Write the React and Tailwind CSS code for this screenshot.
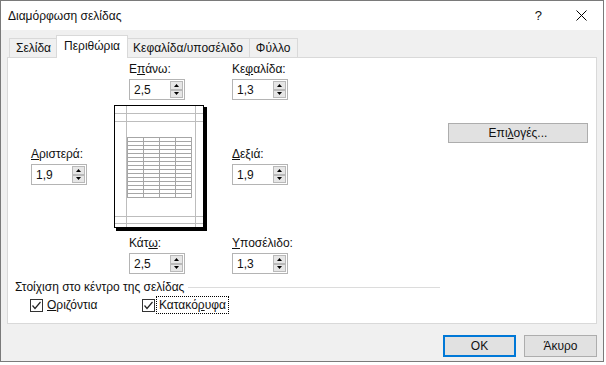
import React from 'react';

function SpinBtn({ up }) {
  return (
    <div className="flex flex-1 items-center justify-center border border-[#b9b9b9] bg-[#e6e6e6]">
      <svg width="5" height="3" viewBox="0 0 5 3">
        <path d={up ? 'M2.5 0L5 3H0Z' : 'M0 0H5L2.5 3Z'} fill="#000" />
      </svg>
    </div>
  );
}

function Spin({ value }) {
  return (
    <div className="flex h-[21px] w-[56px] items-center border border-[#b4b4b4] bg-white">
      <span className="flex-1 pl-[4px] leading-none">{value}</span>
      <div className="mr-[1px] flex h-[17px] w-[13px] flex-col">
        <SpinBtn up />
        <SpinBtn />
      </div>
    </div>
  );
}

function Label({ children, className = '' }) {
  return <div className={`h-[15px] leading-[15px] ${className}`}>{children}</div>;
}

function PagePreview() {
  const rows = [];
  for (let i = 0; i <= 15; i++) rows.push(32 + i * 4);
  return (
    <svg width="93" height="126" viewBox="0 0 93 126">
      <rect x="2" y="2" width="91" height="124" fill="#000" />
      <rect x="0.5" y="0.5" width="89" height="122" fill="#fff" stroke="#000" />
      <g stroke="#bdbdbd" strokeWidth="1">
        <line x1="12.5" y1="1" x2="12.5" y2="122" />
        <line x1="81.5" y1="1" x2="81.5" y2="122" />
        <line x1="1" y1="8.5" x2="89" y2="8.5" />
        <line x1="1" y1="16.5" x2="89" y2="16.5" />
        <line x1="1" y1="111.5" x2="89" y2="111.5" />
        <line x1="1" y1="118.5" x2="89" y2="118.5" />
      </g>
      <g stroke="#a6a6a6" strokeWidth="1">
        {rows.map((y) => (
          <line key={y} x1="13" y1={y + 0.5} x2="77" y2={y + 0.5} />
        ))}
        {[13, 29, 45, 61, 77].map((x) => (
          <line key={x} x1={x + 0.5} y1="32" x2={x + 0.5} y2="93" />
        ))}
      </g>
    </svg>
  );
}

function Check({ children, focus }) {
  return (
    <div className="flex h-[18px] items-center">
      <div className="flex h-[13px] w-[13px] items-center justify-center border border-[#333] bg-white">
        <svg width="11" height="11" viewBox="0 0 11 11">
          <path d="M1.5 5.5L4 8.5L9.5 2" fill="none" stroke="#222" strokeWidth="1.2" />
        </svg>
      </div>
      <span className={focus ? 'ml-[1px] border border-dotted border-black px-[2px] leading-[16px]' : 'ml-[4px]'}>
        {children}
      </span>
    </div>
  );
}

export default function App() {
  return (
    <div className="h-[365px] w-[606px] bg-white font-['Liberation_Sans',Arial,sans-serif] text-[12px] text-[#111]">
      <div className="flex h-[362px] w-[604px] flex-col border border-[#7a7a7a] bg-[#f0f0f0]">
        {/* title bar */}
        <div className="flex h-[29px] shrink-0 items-center bg-white pl-[7px]">
          <span className="flex-1">Διαμόρφωση σελίδας</span>
          <span className="mr-[34px] text-[13px]">?</span>
          <svg className="mr-[16px]" width="11" height="11" viewBox="0 0 11 11">
            <path d="M0.5 0.5L10.5 10.5M10.5 0.5L0.5 10.5" stroke="#000" strokeWidth="1" />
          </svg>
        </div>

        <div className="flex flex-1 flex-col px-[6px]">
          {/* tabs */}
          <div className="ml-[2px] mt-[6px] flex h-[21px] items-end">
            <div className="flex h-[19px] items-center border border-b-0 border-[#d9d9d9] px-[6px]">Σελίδα</div>
            <div className="relative z-10 -mx-[2px] -mb-px flex h-[23px] items-center border border-b-0 border-[#d9d9d9] bg-white px-[7px] pb-[2px]">
              Περιθώρια
            </div>
            <div className="flex h-[19px] items-center border border-b-0 border-[#d9d9d9] px-[6px]">Κεφαλίδα/υποσέλιδο</div>
            <div className="flex h-[19px] items-center border border-b-0 border-l-0 border-[#d9d9d9] px-[6px]">Φύλλο</div>
          </div>

          {/* panel */}
          <div className="flex h-[267px] flex-col border border-[#d9d9d9] bg-white">
            <div className="flex pl-[23px] pt-[4px]">
              <div className="w-[83px] pt-[85px]">
                <Label><span className="underline">Α</span>ριστερά:</Label>
                <div className="mt-[2px]"><Spin value="1,9" /></div>
              </div>

              <div className="w-[118px]">
                <Label className="ml-[15px]">Ε<span className="underline">π</span>άνω:</Label>
                <div className="ml-[15px] mt-[2px]"><Spin value="2,5" /></div>
                <div className="mt-[5px]"><PagePreview /></div>
                <Label className="ml-[15px] mt-[5px]">Κάτ<span className="underline">ω</span>:</Label>
                <div className="ml-[15px] mt-[2px]"><Spin value="2,5" /></div>
              </div>

              <div className="w-[216px]">
                <Label>Κε<span className="underline">φ</span>αλίδα:</Label>
                <div className="mt-[2px]"><Spin value="1,3" /></div>
                <Label className="mt-[47px]"><span className="underline">Δ</span>εξιά:</Label>
                <div className="mt-[2px]"><Spin value="1,9" /></div>
                <Label className="mt-[51px]"><span className="underline">Υ</span>ποσέλιδο:</Label>
                <div className="mt-[2px]"><Spin value="1,3" /></div>
              </div>

              <div className="pt-[61px]">
                <button className="flex h-[20px] w-[140px] items-center justify-center border border-[#adadad] bg-[#e1e1e1]">
                  Επι<span className="underline">λ</span>ογές...
                </button>
              </div>
            </div>

            {/* center on page */}
            <div className="ml-[7px] mt-[6px] flex h-[15px] w-[425px] items-center">
              <span className="leading-[15px]">Στοίχιση στο κέντρο της σελίδας</span>
              <div className="ml-[4px] h-px flex-1 bg-[#dcdcdc]" />
            </div>
            <div className="ml-[22px] mt-[1px] flex">
              <div className="w-[112px]">
                <Check><span className="underline">Ο</span>ριζόντια</Check>
              </div>
              <Check focus>Κατακό<span className="underline">ρ</span>υφα</Check>
            </div>
          </div>

          {/* footer */}
          <div className="mt-[11px] flex justify-end gap-[8px]">
            <button className="flex h-[22px] w-[73px] items-center justify-center border-2 border-[#0078d7] bg-[#e1e1e1]">OK</button>
            <button className="flex h-[22px] w-[73px] items-center justify-center border border-[#adadad] bg-[#e1e1e1]">Άκυρο</button>
          </div>
        </div>
      </div>
    </div>
  );
}
